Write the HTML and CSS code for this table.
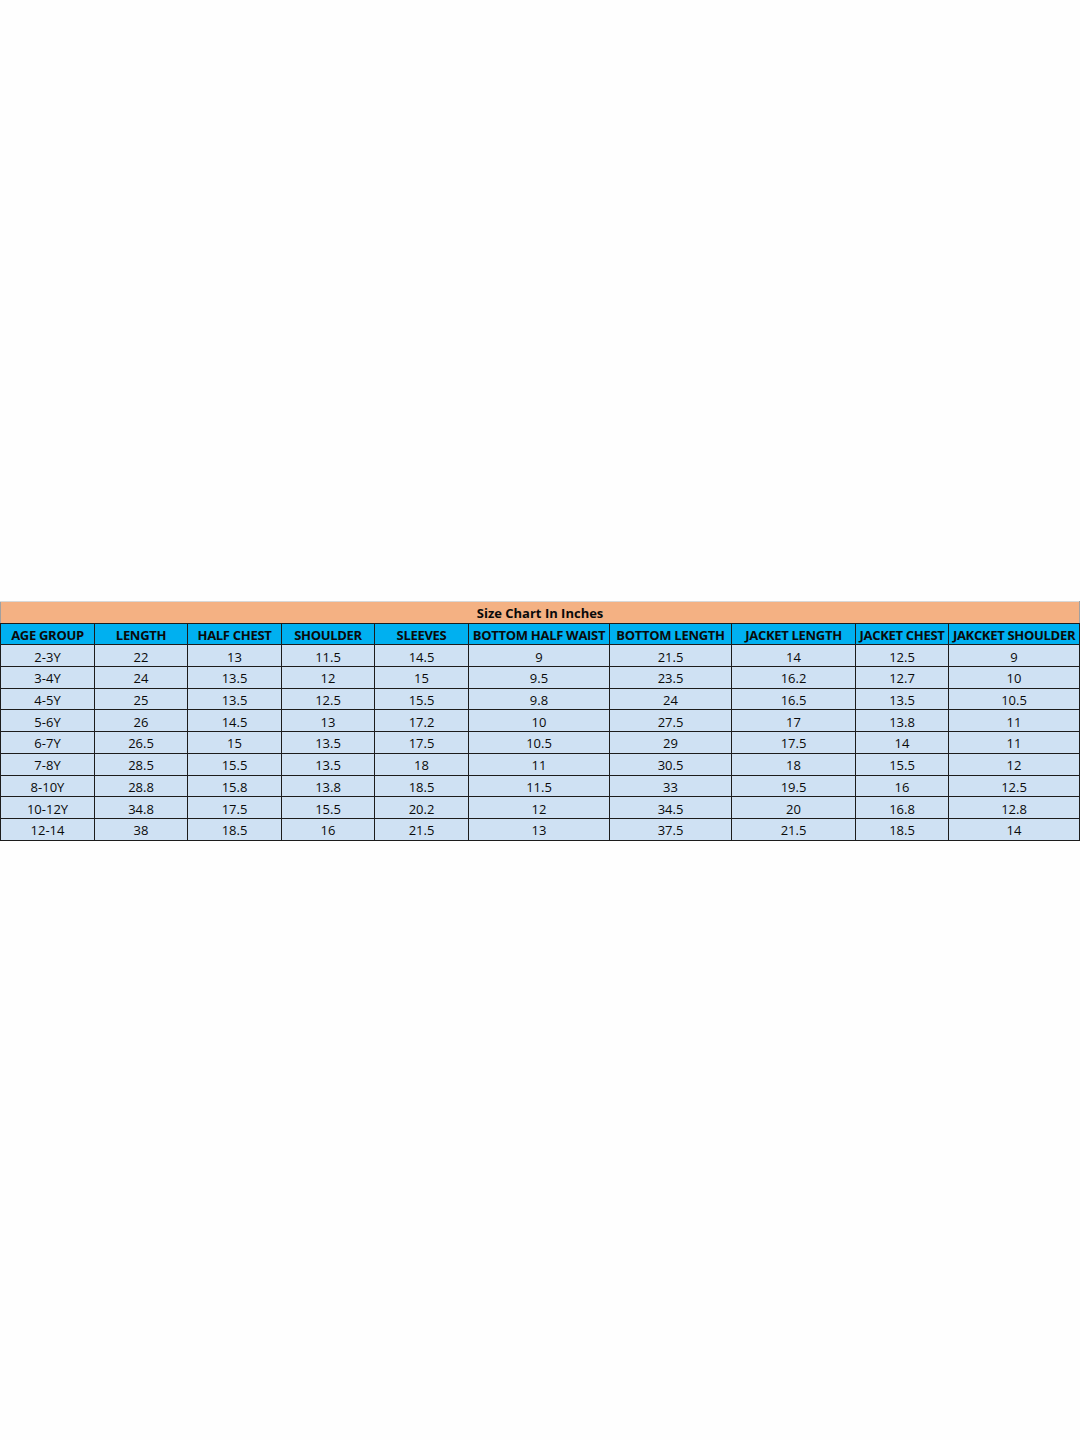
FILE: index.html
```html
<!DOCTYPE html>
<html>
<head>
<meta charset="utf-8">
<link rel="stylesheet" href="styles.css">
</head>
<body>
<div class="page">
<table class="chart">
<colgroup>
<col style="width:94px"><col style="width:93px"><col style="width:94px"><col style="width:93px"><col style="width:94px"><col style="width:141px"><col style="width:122px"><col style="width:124px"><col style="width:93px"><col style="width:131px">
</colgroup>
<thead>
<tr class="title"><th colspan="10">Size Chart In Inches</th></tr>
<tr class="head">
<th>AGE GROUP</th><th>LENGTH</th><th>HALF CHEST</th><th>SHOULDER</th><th>SLEEVES</th><th>BOTTOM HALF WAIST</th><th>BOTTOM LENGTH</th><th>JACKET LENGTH</th><th>JACKET CHEST</th><th>JAKCKET SHOULDER</th>
</tr>
</thead>
<tbody>
<tr><td>2-3Y</td><td>22</td><td>13</td><td>11.5</td><td>14.5</td><td>9</td><td>21.5</td><td>14</td><td>12.5</td><td>9</td></tr>
<tr><td>3-4Y</td><td>24</td><td>13.5</td><td>12</td><td>15</td><td>9.5</td><td>23.5</td><td>16.2</td><td>12.7</td><td>10</td></tr>
<tr><td>4-5Y</td><td>25</td><td>13.5</td><td>12.5</td><td>15.5</td><td>9.8</td><td>24</td><td>16.5</td><td>13.5</td><td>10.5</td></tr>
<tr><td>5-6Y</td><td>26</td><td>14.5</td><td>13</td><td>17.2</td><td>10</td><td>27.5</td><td>17</td><td>13.8</td><td>11</td></tr>
<tr><td>6-7Y</td><td>26.5</td><td>15</td><td>13.5</td><td>17.5</td><td>10.5</td><td>29</td><td>17.5</td><td>14</td><td>11</td></tr>
<tr><td>7-8Y</td><td>28.5</td><td>15.5</td><td>13.5</td><td>18</td><td>11</td><td>30.5</td><td>18</td><td>15.5</td><td>12</td></tr>
<tr><td>8-10Y</td><td>28.8</td><td>15.8</td><td>13.8</td><td>18.5</td><td>11.5</td><td>33</td><td>19.5</td><td>16</td><td>12.5</td></tr>
<tr><td>10-12Y</td><td>34.8</td><td>17.5</td><td>15.5</td><td>20.2</td><td>12</td><td>34.5</td><td>20</td><td>16.8</td><td>12.8</td></tr>
<tr><td>12-14</td><td>38</td><td>18.5</td><td>16</td><td>21.5</td><td>13</td><td>37.5</td><td>21.5</td><td>18.5</td><td>14</td></tr>
</tbody>
</table>
</div>
</body>
</html>
```

FILE: styles.css
```css
html, body {
  margin: 0;
  padding: 0;
  background: #fefefe;
}
.page {
  width: 1080px;
  height: 1440px;
  padding-top: 601px;
  box-sizing: border-box;
}
.chart {
  border-collapse: collapse;
  table-layout: fixed;
  width: 1079px;
  font-family: "Open Sans", "Liberation Sans", sans-serif;
  font-size: 13px;
  color: #0a0a0a;
}
.chart th, .chart td {
  border: 1px solid #1c1c1c;
  height: 18.7px;
  padding: 2px 0 0;
  text-align: center;
  white-space: nowrap;
  overflow: hidden;
  line-height: 18px;
}
.chart td {
  background: #cfe1f3;
  font-weight: 400;
}
.title th {
  background: #f4b183;
  font-weight: 700;
  border-top: 1px solid #d8d8d8;
  border-left: 1px solid #a0a0a0;
  border-right: 1px solid #a0a0a0;
}
.head th {
  background: #00b0f0;
  font-weight: 700;
  letter-spacing: -0.3px;
}
```
